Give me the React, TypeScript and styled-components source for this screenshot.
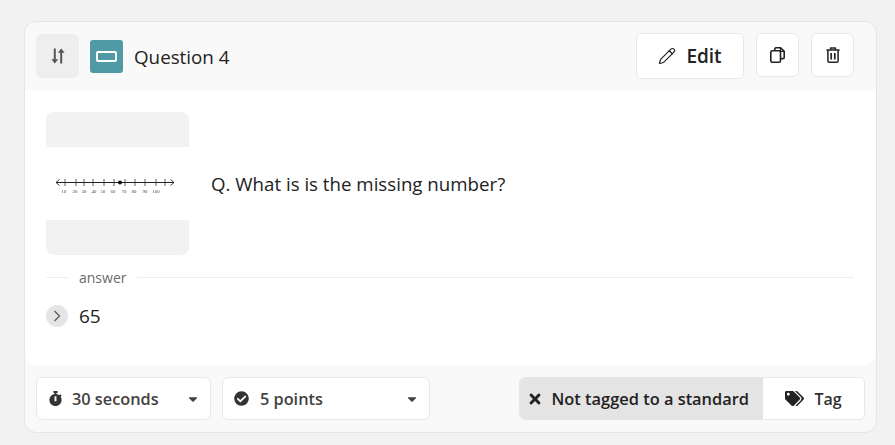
import React from 'react';
import styled, { createGlobalStyle } from 'styled-components';
import { Pencil } from 'lucide-react';
import { FaStopwatch, FaCheckCircle, FaTags, FaTimes, FaCaretDown } from 'react-icons/fa';

const GlobalStyle = createGlobalStyle`
  html, body {
    margin: 0;
    padding: 0;
    background: #f2f2f2;
    font-family: "Open Sans", "Liberation Sans", sans-serif;
    color: #1c1c1c;
  }
  * { box-sizing: border-box; }
`;

const Page = styled.div`
  width: 895px;
  height: 445px;
  padding: 21px 18px 12px 24px;
`;

const Card = styled.div`
  width: 853px;
  height: 412px;
  background: #f9f9f9;
  border: 1px solid #e5e5e5;
  border-radius: 12px;
  display: flex;
  flex-direction: column;
`;

const Header = styled.div`
  height: 68px;
  flex-shrink: 0;
  display: flex;
  align-items: flex-start;
  padding: 11px 22px 0 11px;
`;

const SortHandle = styled.div`
  width: 43px;
  height: 44px;
  margin-top: 1px;
  border-radius: 6px;
  background: #eeeeee;
  display: flex;
  align-items: center;
  justify-content: center;
`;

const TypeBadge = styled.div`
  width: 33px;
  height: 33px;
  margin: 7px 0 0 11px;
  border-radius: 3px;
  background: #4f9aa5;
  display: flex;
  align-items: center;
  justify-content: center;
`;

const TypeGlyph = styled.div`
  width: 21px;
  height: 11px;
  border: 2px solid #fff;
  border-radius: 2px;
`;

const QuestionTitle = styled.div`
  margin: 8px 0 0 11px;
  font-size: 18.8px;
  line-height: 33px;
  color: #222;
`;

const HeaderActions = styled.div`
  margin-left: auto;
  display: flex;
  gap: 12px;
  align-items: flex-start;
`;

const WhiteButton = styled.div<{ $w: number; $h: number }>`
  width: ${p => p.$w}px;
  height: ${p => p.$h}px;
  background: #fff;
  border: 1.5px solid #e8e8e8;
  border-radius: 6px;
  display: flex;
  align-items: center;
  justify-content: center;
  gap: 10px;
  color: #222;
  font-size: 19px;
  font-weight: 600;
`;

const Body = styled.div`
  height: 275px;
  flex-shrink: 0;
  background: #fff;
  border-radius: 0 0 12px 12px;
  padding: 22px 22px 0 21px;
`;

const QuestionRow = styled.div`
  display: flex;
  align-items: center;
  gap: 22px;
`;

const Thumb = styled.div`
  width: 143px;
  height: 143px;
  border-radius: 8px;
  overflow: hidden;
  background: #f2f2f2;
  display: flex;
  align-items: center;
`;

const ThumbInner = styled.div`
  width: 143px;
  height: 73px;
  background: #fff;
  display: flex;
  align-items: center;
  justify-content: center;
`;

const QuestionText = styled.div`
  font-size: 18.7px;
  line-height: 24px;
  color: #222;
`;

const AnswerDivider = styled.div`
  margin-top: 12px;
  height: 20px;
  display: flex;
  align-items: center;
  gap: 11px;
  font-size: 14px;
  color: #6b6b6b;
`;

const Rule = styled.div<{ $grow?: boolean }>`
  height: 1px;
  background: #eeeeee;
  width: 22px;
  flex: ${p => (p.$grow ? 1 : 'none')};
`;

const AnswerRow = styled.div`
  margin-top: 17px;
  display: flex;
  align-items: center;
  gap: 11px;
  font-size: 19px;
  line-height: 24px;
  color: #222;
`;

const Chevron = styled.div`
  width: 22px;
  height: 22px;
  border-radius: 50%;
  background: #e5e5e5;
  display: flex;
  align-items: center;
  justify-content: center;
`;

const Footer = styled.div`
  flex: 1;
  display: flex;
  align-items: flex-start;
  padding: 12px 11px 0 11px;
  gap: 11px;
`;

const Select = styled.div<{ $w: number; $gap: number }>`
  width: ${p => p.$w}px;
  height: 43px;
  background: #fff;
  border: 1.5px solid #e8e8e8;
  border-radius: 6px;
  display: flex;
  align-items: center;
  padding: 0 10px 0 10.5px;
  gap: ${p => p.$gap}px;
  font-size: 16.3px;
  font-weight: 600;
  color: #424242;
`;

const SelectIcon = styled.span`
  display: flex;
  color: #333;
  font-size: 15px;
`;

const Caret = styled.span`
  margin-left: auto;
  display: flex;
  color: #424242;
  font-size: 14px;
`;

const TagGroup = styled.div`
  margin-left: auto;
  width: 346px;
  height: 43px;
  display: flex;
  border: 1.5px solid #e8e8e8;
  border-radius: 6px;
  overflow: hidden;
  font-size: 16.4px;
  font-weight: 600;
`;

const TagStatus = styled.div`
  width: 243px;
  background: #e4e4e4;
  display: flex;
  align-items: center;
  padding-left: 6.5px;
  gap: 9px;
  color: #222;
  white-space: nowrap;
`;

const TagButton = styled.div`
  flex: 1;
  background: #fff;
  display: flex;
  align-items: center;
  justify-content: center;
  gap: 10px;
  font-size: 16px;
  color: #333;
`;

const SortIcon = () => (
  <svg width="14" height="16" viewBox="0 0 14 16" fill="#555">
    <path d="M2.8 0.5h2v10.7h2.4L3.8 15.5 .4 11.2h2.4z" />
    <path d="M9.2 15.5h2V4.8h2.4L10.2 .5 6.8 4.8h2.4z" />
  </svg>
);

const CopyIcon = () => (
  <svg width="15" height="16" viewBox="0 0 15 16" fill="none" stroke="#222" strokeWidth="1.6" strokeLinejoin="round">
    <path d="M4.8 3.6V2c0-.7.5-1.2 1.2-1.2h4.6l3.6 3.6v6c0 .7-.5 1.2-1.2 1.2h-2.5" />
    <path d="M10.4 1v3.4h3.6" strokeWidth="1.1" />
    <rect x="0.8" y="3.8" width="9.7" height="11.4" rx="1.5" fill="#fff" />
  </svg>
);

const TrashIcon = () => (
  <svg width="14" height="16" viewBox="0 0 14 16" fill="none" stroke="#222" strokeWidth="1.5" strokeLinejoin="round">
    <path d="M.4 3h13.2" />
    <path d="M4.6 3V.9h4.8V3" />
    <path d="M1.9 3v10.9c0 .8.5 1.3 1.3 1.3h7.6c.8 0 1.3-.5 1.3-1.3V3" />
    <path d="M5.2 6v6.6M8.8 6v6.6" strokeWidth="1.7" />
  </svg>
);

const ChevronIcon = () => (
  <svg width="8" height="12" viewBox="0 0 8 12" fill="none" stroke="#555" strokeWidth="1.2">
    <path d="M1.5 1l5 5-5 5" />
  </svg>
);

// picture coordinates minus the svg's left edge
const ticks = [65, 76, 84, 93, 104, 114, 125, 135, 145, 156, 165].map(x => x - 55);
const labelXs = [64, 75, 84, 94, 103, 113, 124, 134, 145, 156].map(x => x - 55);
const labels = ['10', '20', '30', '40', '50', '60', '70', '80', '90', '100'];

const LineSvg = styled.svg`
  filter: blur(0.25px);
`;

const NumberLine = () => (
  <LineSvg width="125" height="24" viewBox="0 0 125 24">
    <path d="M1 10.5h118" stroke="#222" strokeWidth="1" />
    <path d="M4.5 7.5L1 10.5 4.5 13.5M115.5 7.5l3.5 3-3.5 3" fill="none" stroke="#222" strokeWidth="0.9" />
    {ticks.map(x => (
      <path key={x} d={`M${x} 7v7`} stroke="#333" strokeWidth="0.8" />
    ))}
    <circle cx="65" cy="10.5" r="2" fill="#111" />
    {labels.map((l, i) => (
      <text key={l} x={labelXs[i]} y="20.5" fontSize="4.8" fill="#444" fontFamily="Liberation Serif, serif" textAnchor="middle">
        {l}
      </text>
    ))}
  </LineSvg>
);

const App = () => {
  return (
    <Page>
      <GlobalStyle />
      <Card>
        <Header>
          <SortHandle>
            <SortIcon />
          </SortHandle>
          <TypeBadge>
            <TypeGlyph />
          </TypeBadge>
          <QuestionTitle>Question 4</QuestionTitle>
          <HeaderActions>
            <WhiteButton $w={108} $h={46}>
              <Pencil size={18} strokeWidth={1.6} />
              Edit
            </WhiteButton>
            <WhiteButton $w={43} $h={44}>
              <CopyIcon />
            </WhiteButton>
            <WhiteButton $w={43} $h={44}>
              <TrashIcon />
            </WhiteButton>
          </HeaderActions>
        </Header>
        <Body>
          <QuestionRow>
            <Thumb>
              <ThumbInner>
                <NumberLine />
              </ThumbInner>
            </Thumb>
            <QuestionText>Q. What is is the missing number?</QuestionText>
          </QuestionRow>
          <AnswerDivider>
            <Rule />
            answer
            <Rule $grow />
          </AnswerDivider>
          <AnswerRow>
            <Chevron>
              <ChevronIcon />
            </Chevron>
            65
          </AnswerRow>
        </Body>
        <Footer>
          <Select $w={175} $gap={9.5}>
            <SelectIcon>
              <FaStopwatch />
            </SelectIcon>
            30 seconds
            <Caret>
              <FaCaretDown />
            </Caret>
          </Select>
          <Select $w={208} $gap={11.5}>
            <SelectIcon>
              <FaCheckCircle />
            </SelectIcon>
            5 points
            <Caret>
              <FaCaretDown />
            </Caret>
          </Select>
          <TagGroup>
            <TagStatus>
              <FaTimes size={16} />
              Not tagged to a standard
            </TagStatus>
            <TagButton>
              <FaTags size={19} color="#222" />
              Tag
            </TagButton>
          </TagGroup>
        </Footer>
      </Card>
    </Page>
  );
};

export default App;
